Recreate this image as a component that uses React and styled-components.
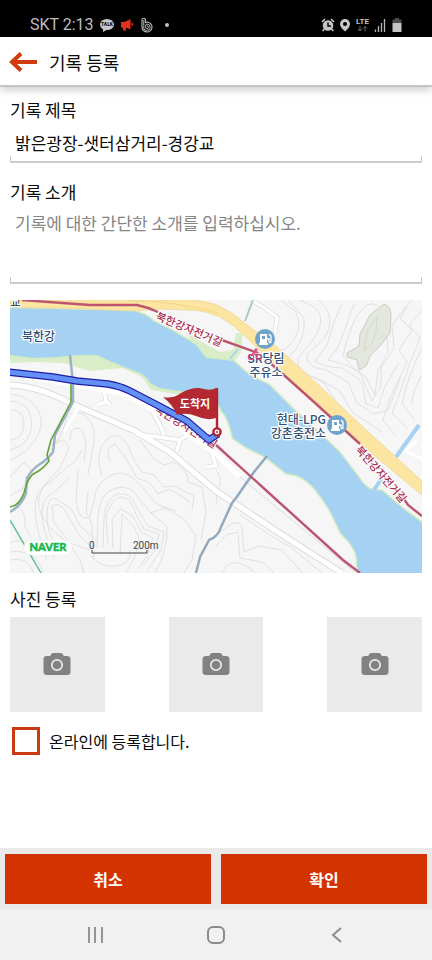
import { useState } from "react";
import styled, { createGlobalStyle } from "styled-components";

const GlobalStyle = createGlobalStyle`
  * {
    box-sizing: border-box;
  }
  body {
    margin: 0;
    background-color: white;
    color: #0a0a0a;
    font-family: "Noto Sans CJK KR", sans-serif;
  }
`;

const Screen = styled.div`
  display: flex;
  flex-direction: column;
  min-height: 100vh;
`;

const StatusBar = styled.div`
  display: flex;
  justify-content: space-between;
  align-items: center;
  height: 37px;
  padding: 13px 30px 0 30px;
  background-color: black;
  color: #bebebe;
  font-family: Roboto, sans-serif;
  font-size: 16px;
  line-height: 24px;
`;

const StatusGroup = styled.div`
  display: flex;
  align-items: center;
  gap: ${(props) => props.$gap};
`;

const Header = styled.header`
  display: flex;
  align-items: center;
  gap: 11px;
  height: 50px;
  padding: 2px 9px 0;
  border-bottom: 2px solid #c6c6c6;
  box-shadow: 0 3px 8px rgba(0, 0, 0, 0.2);
`;

const Title = styled.h1`
  margin: 0;
  font-size: 18px;
  font-weight: 400;
  line-height: 26px;
`;

const IconButton = styled.button`
  display: flex;
  padding: 0;
  border: none;
  background: none;
  cursor: pointer;
`;

const Form = styled.form`
  display: flex;
  flex-direction: column;
  flex: 1;
`;

const Content = styled.main`
  flex: 1;
  padding: 10px;
`;

const Field = styled.div`
  display: flex;
  flex-direction: column;
  margin-bottom: 16px;
`;

const Label = styled.label`
  font-size: 17px;
  line-height: 26px;
`;

const tickedLine = `
  display: block;
  width: 100%;
  padding: 4px 5px;
  border: none;
  border-bottom: 2px solid #cccccc;
  border-radius: 0;
  outline: none;
  background:
    linear-gradient(#cccccc, #cccccc) left bottom / 1px 5px no-repeat,
    linear-gradient(#cccccc, #cccccc) right bottom / 1px 5px no-repeat;
  color: #0a0a0a;
  font-family: inherit;
  font-size: 17px;
  line-height: 26px;
`;

const Input = styled.input`
  ${tickedLine}
  height: 40px;
`;

const TextArea = styled.textarea`
  ${tickedLine}
  height: 79px;
  padding-top: 5px;
  resize: none;
  &::placeholder {
    color: #858585;
    opacity: 1;
  }
`;

const Map = styled.svg`
  display: block;
  width: 100%;
  height: auto;
`;

const Subtitle = styled.h2`
  margin: 13px 0 5px;
  font-size: 17px;
  font-weight: 400;
  line-height: 26px;
`;

const Photos = styled.div`
  display: grid;
  grid-template-columns: repeat(3, 23%);
  justify-content: space-between;
`;

const PhotoButton = styled.button`
  display: flex;
  align-items: center;
  justify-content: center;
  aspect-ratio: 1;
  padding: 0;
  border: none;
  background-color: #eaeaea;
  cursor: pointer;
`;

const CheckLabel = styled.label`
  display: flex;
  align-items: center;
  gap: 9px;
  margin-top: 15px;
  padding-left: 2px;
  font-size: 16px;
  line-height: 24px;
`;

const Checkbox = styled.input`
  appearance: none;
  width: 28px;
  height: 28px;
  margin: 0;
  border: 3px solid #c93a12;
  background-color: white;
  &:checked {
    background-color: #d33300;
    box-shadow: inset 0 0 0 4px white;
  }
`;

const Actions = styled.div`
  display: grid;
  grid-template-columns: 1fr 1fr;
  gap: 10px;
  padding: 6px 5px;
  background-color: #eaeaea;
`;

const Button = styled.button`
  height: 50px;
  padding: 0;
  border: none;
  background-color: #d33300;
  color: white;
  font-family: inherit;
  font-size: 16px;
  font-weight: bold;
  cursor: pointer;
`;

const NavBar = styled.nav`
  display: flex;
  justify-content: space-between;
  align-items: center;
  height: 50px;
  padding: 0 83px;
  background-color: #f1f1f1;
`;

const RIVER =
  "M10 308 L90 310 133 311 Q146 314 153 321 L173 331 196 345 206 358 233 361 249 375 269 385 292 408 319 433 339 452 359 478 Q366 489 373 490 L382 491 402 508 422 523 V573 H358 L357 558 Q356 547 341 533 L331 512 Q324 500 316 490 Q306 478 296 475 L286 473 266 457 246 447 233 438 Q229 418 222 411 L213 394 187 392 160 388 150 383 Q147 376 138 372 L127 368 110 361 97 355 77 355 57 357 33 358 10 355 Z";

const HIGHWAY =
  "M10 300 H193 Q206 301 217 305 Q233 312 247 325 L277 347 310 377 363 427 422 481 V495 L383 463 330 417 273 363 247 338 Q234 325 220 317 Q204 310 187 310 L160 309 133 311 90 309 10 307 Z";

const MINOR_ROADS = [
  "M10 385 Q38 386 70 403 L135 431 170 452 216 491 290 540 342 573",
  "M136 434 L180 440 194 430 208 442 216 466 207 467 M180 440 L177 451 M151 409 L160 425 164 435",
  "M104 389 L106 402 97 405 M106 400 L110 405",
];

const CONTOURS = [
  // south hills
  "M10 394 Q30 396 38 410 T35 440 Q25 455 10 460",
  "M10 401 Q28 402 31 418 T22 445 L10 450",
  "M10 410 Q24 409 24 424 T10 440",
  "M56 444 Q64 430 66 420 T84 414 Q96 424 94 440 T88 474",
  "M70 440 Q70 428 77 428 T86 444 L84 462",
  "M50 445 Q66 435 69 448 L60 468 44 486 Q34 500 42 516 L52 530 70 545 80 560 84 573",
  "M47 560 Q36 530 35 510 T50 482 L76 460 82 450",
  "M54 558 Q42 530 42 514 T54 492 L69 478",
  "M62 555 Q46 535 47 514 T58 500 L72 510 80 526 96 540",
  "M52 506 Q60 500 67 514 L80 536 92 547 M52 506 L54 522 70 543 90 550",
  "M78 470 L76 500 Q79 524 90 516 L94 502 Q95 482 112 475 T146 492 L158 505 176 511",
  "M88 491 L86 514 Q94 520 92 540 L94 560",
  "M97 548 L98 515 Q100 492 116 488 T140 500 L152 514 167 526 Q168 550 155 573",
  "M103 548 L104 518 Q106 497 118 494 T136 506 L148 526 164 532 161 550 148 570",
  "M108 545 L106 516 Q112 498 121 497 T136 514 L144 529 159 534 155 550 143 566",
  "M113 548 L112 519 121 509 133 516 141 532 153 538 148 554 138 570",
  "M120 555 L122 514 134 527 140 541 134 558 126 573",
  "M102 476 Q94 452 106 440 T128 446 L134 460 142 472 154 475 164 487 174 486 194 496 192 510",
  "M110 462 Q104 448 115 444 L126 458 137 478 150 483 158 494 170 489 190 502",
  "M140 440 L154 459 164 465 174 462 186 472 188 482 202 487 206 512 201 540",
  "M150 513 L165 508 184 519 196 536 192 560 184 573",
  "M90 555 Q100 568 116 566 T130 550",
  "M10 552 Q36 548 43 573 M10 560 Q27 556 34 573 M10 543 Q20 538 30 545",
  "M10 477 L24 462 31 470 23 488 10 496",
  "M14 505 Q26 508 25 526 L31 537",
  "M216 470 Q224 480 218 490 L216 505",
  "M216 535 L226 528 Q238 518 242 526 L244 552 258 546 282 550 302 573",
  "M216 546 L226 535 238 532 240 558 262 562 274 573",
  "M222 573 Q230 556 248 567 L256 573",
  "M240 515 L270 535 292 548 322 573",
  // north-east hill
  "M281 300 L296 312 Q304 330 290 345 L281 352",
  "M288 300 L304 318 Q306 336 295 350 L288 358",
  "M300 300 L314 307 Q328 318 313 340 L298 358 Q296 374 317 378 L340 391 352 412 382 432",
  "M318 300 Q339 317 323 340 L307 354 Q304 367 326 370 L348 382 357 403 374 414 388 410 401 377",
  "M342 304 L334 322 327 345 315 361 Q322 367 342 368 L362 382 366 404 378 408 385 386 399 363",
  "M354 304 L345 329 337 349 328 360 346 365 360 372 372 401 381 386 381 367 394 348 392 326 406 306",
  "M367 305 L355 318 347 340 343 356 356 371 365 376 375 395 378 371 388 351 385 316 Q378 300 367 305",
  "M302 372 L324 383 340 407 364 430 M296 380 L316 386 326 404 352 426",
  "M411 300 L400 318 412 330 399 350 407 362 390 398 383 420 396 436",
  "M422 310 L409 325 420 338 411 360 398 398 392 413 407 428",
  "M422 348 Q407 378 402 404 L415 420 M422 375 Q412 392 412 404",
];

const GasIcon = ({ x, y }) => (
  <g transform={`translate(${x} ${y})`}>
    <circle r="10" fill="#6fa3cc" />
    <path d="M-5 5 V-5 H2 V5 Z M-6 4 H3 V6 H-6 Z" fill="white" />
    <path d="M-3 -3 H0 V0 H-3 Z" fill="#6fa3cc" />
    <path d="M2 0 H4 V3 Q6 5 6 2 V-3 L4 -5" fill="none" stroke="white" strokeWidth="1.3" />
  </g>
);

const RouteMap = () => (
  <Map viewBox="10 300 412 273" role="img" aria-label="지도" fontFamily='"Noto Sans CJK KR", sans-serif'>
    <rect x="10" y="300" width="412" height="273" fill="#f6f6f6" />
    <g fill="none" stroke="#dadada" strokeWidth="0.8" strokeLinejoin="round">
      {CONTOURS.map((d) => (
        <path key={d} d={d} />
      ))}
    </g>
    <path
      d="M384 304 Q391 306 391 316 L390 333 380 346 370 356 366 366 359 370 357 360 347 357 347 353 359 346 360 334 370 315 Z"
      fill="#e3e7dd"
      stroke="#c9cdc4"
    />
    <path d="M377 317 L367 331 364 350 371 345 376 332 Z" fill="none" stroke="#cfd4c9" strokeWidth="0.8" />

    {/* banks and river */}
    <path d="M10 352 V363 L37 362 63 363 90 371 123 368 142 377 151 390 188 396 212 396 190 380 77 352 Z" fill="#d9edc8" />
    <path d="M186 332 L204 343 220 352 233 350 236 333 243 333 241 352 234 362 200 358 Z" fill="#d9edc8" />
    <path d={RIVER} fill="#a5d2f3" stroke="#d3ecc0" strokeWidth="3" />
    <path d={RIVER} fill="#a5d2f3" />
    <path d="M374 490 L382 478 M396 457 L419 425" stroke="#a5d2f3" strokeWidth="4" />
    <path d="M230 359 L238 349" stroke="#a5d2f3" strokeWidth="1.5" />

    {/* minor roads */}
    <g fill="none" strokeLinejoin="round">
      {MINOR_ROADS.map((d, i) => (
        <path key={d} d={d} stroke="#dddddd" strokeWidth={i === 0 ? 7 : 5} />
      ))}
      <path d="M251 300 L263 307 277 317 275 334" stroke="#dddddd" strokeWidth="4.500" />
      <g stroke="white">
        {MINOR_ROADS.map((d, i) => (
          <path key={d} d={d} strokeWidth={i === 0 ? 5 : 3.5} />
        ))}
        <path d="M251 300 L263 307 277 317 275 334 M417 440 L405 451 422 459" strokeWidth="3" />
        <path d="M70 405 L78 408 64 432" strokeWidth="3" />
        <path d="M10 373 L80 386 125 394 160 414 216 454 240 477" strokeWidth="5" />
      </g>
      <path d="M240 477 L356 573" stroke="#dcdcdc" />
      <path d="M70 355 L73 383 73 402 55 435 53 452 Q47 460 40 464 T27 478 L26 493 Q22 505 10 512" stroke="#9bb2c8" strokeWidth="2.5" />
      <path d="M71 384 L71 402 51 440 47 455 49 461 Q42 470 35 473 T24 493 Q19 506 10 507" stroke="#64a338" strokeWidth="1.6" />
      <path d="M267 456 L254 472 236 498 232 503 221 527 Q218 537 209 540 L200 557 196 573" stroke="#91a9bf" strokeWidth="2.5" />
      <path d="M10 520 L41 573" stroke="#5bbd91" strokeWidth="1.4" />
      <path d="M253 300 L245 321" stroke="#a9cabd" strokeWidth="2" />
    </g>

    {/* highway */}
    <path d={HIGHWAY} fill="#fbe5a0" stroke="#eed79b" strokeWidth="0.8" />
    <path d="M128 301 Q170 300 218 313" fill="none" stroke="#f0d080" strokeWidth="0.8" />

    {/* bicycle path */}
    <g fill="none" stroke="#bd5571" strokeWidth="2.4">
      <path d="M22 300 L90 305 137 305 Q147 307 158 312" />
      <path d="M219 339 L258 353 276 368 314 402 360 444" />
      <path d="M402 496 L408 505 422 516" />
      <path d="M204 434 L216 445 280 503 343 560 360 573" />
    </g>
    <g fill="#a62e53" stroke="white" strokeWidth="2" paintOrder="stroke" fontSize="11" fontWeight="500">
      <text transform="translate(155 319) rotate(23)">북한강자전거길</text>
      <text transform="translate(355 450) rotate(49)">북한강자전거길</text>
      <text transform="translate(154 411) rotate(32)">북한강자전거길</text>
    </g>

    <g fill="#31527b" stroke="white" strokeWidth="2.4" paintOrder="stroke" strokeLinejoin="round" fontSize="12" fontWeight="500">
      <text x="22" y="341">북한강</text>
      <text x="266" y="363" textAnchor="middle">SR당림</text>
      <text x="266" y="377" textAnchor="middle">주유소</text>
      <text x="326" y="424" textAnchor="end">현대-LPG</text>
      <text x="326" y="438" textAnchor="end">강촌충전소</text>
    </g>
    <text x="10" y="307" fill="#333333" stroke="white" strokeWidth="2" paintOrder="stroke" fontSize="12">교</text>
    <GasIcon x={265} y={339} />
    <GasIcon x={337} y={425} />
    <g fill="none" stroke="#d94f7f" strokeWidth="1.3">
      <circle cx="251" cy="357" r="2.6" />
      <circle cx="259" cy="357" r="2.6" />
      <path d="M251 356 L254 352 258 353 M254 353 L257 357" />
      <circle cx="256" cy="350" r="1" />
    </g>

    {/* recorded route and its end flag */}
    <g fill="none" strokeLinejoin="round">
      <path d="M8 372 L53 377 77 381 108 384 Q120 386 130 391 L157 405 187 421 209 440 218 434" stroke="#1c1ca8" strokeWidth="7.500" />
      <path d="M8 372 L53 377 77 381 108 384 Q120 386 130 391 L157 405 187 421 209 440 218 434" stroke="#6390f5" strokeWidth="5" />
    </g>
    <path d="M163 397 Q173 399 181 393 Q194 386 204 389 Q211 391 216 388 V418 Q207 421 196 416 Q186 412 177 415 Q173 405 163 397 Z" fill="#b42931" />
    <path d="M217 388 V430" stroke="#b32430" strokeWidth="2.4" />
    <circle cx="217" cy="432" r="3.600" fill="white" stroke="#b32430" strokeWidth="2.4" />
    <circle cx="217" cy="432" r="1" fill="#b32430" />
    <text x="195" y="408" textAnchor="middle" fill="white" fontSize="11" fontWeight="bold">도착지</text>

    <rect x="24" y="540" width="48" height="15" rx="7" fill="white" stroke="#e8e8e8" strokeWidth="0.5" />
    <text x="48" y="551" textAnchor="middle" fill="#18b94b" stroke="#18b94b" strokeWidth="0.5" fontFamily="Lato, sans-serif" fontSize="11" fontWeight="900">NAVER</text>
    <path d="M92 550 V553 H147 V550" fill="none" stroke="#444444" />
    <g fill="#444444" fontFamily="Roboto, sans-serif" fontSize="10">
      <text x="89" y="549">0</text>
      <text x="133" y="549">200m</text>
    </g>
  </Map>
);

const StatusIcons = () => (
  <StatusGroup $gap="5px" aria-hidden="true">
    <svg width="14" height="14" viewBox="0 0 14 14">
      <path d="M1 4 L4 1 M10 1 L13 4 M3.500 11 L1.500 13 M10.500 11 L12.500 13" stroke="#c4c4c4" strokeWidth="1.6" />
      <circle cx="7" cy="7.5" r="5.3" fill="#c4c4c4" />
      <path d="M7 4.5 V8 H10" fill="none" stroke="black" strokeWidth="1.4" />
    </svg>
    <svg width="10" height="14" viewBox="0 0 10 14">
      <path d="M5 1 A5 5 0 0 0 0 6 C0 9.500 5 13.500 5 13.500 S10 9.500 10 6 A5 5 0 0 0 5 1 Z" fill="#c8c8c8" />
      <circle cx="5" cy="6" r="2" fill="black" />
    </svg>
    <svg width="14" height="16" viewBox="0 0 14 16">
      <text x="1" y="7" fill="#c0c0c0" fontFamily="Roboto, sans-serif" fontSize="8" fontWeight="bold">LTE</text>
      <path d="M5 9 V14 M3 12 L5 14 7 12 M10 14.500 V9.500 M8 11.500 L10 9.500 12 11.500" fill="none" stroke="#6a6a6a" />
    </svg>
    <svg width="12" height="14" viewBox="0 0 12 14">
      <path d="M1.500 14 V11.500 M4.500 14 V8 M7.500 14 V5 M10.500 14 V1" stroke="#b4b4b4" strokeWidth="1.300" />
    </svg>
    <svg width="11" height="14" viewBox="0 0 11 14">
      <path d="M4 0 H8 V1.500 H10.500 V5 H1.500 V1.500 H4 Z" fill="#4d4d4d" />
      <path d="M1.500 5 H10.500 V14 H1.500 Z" fill="#c4c4c4" />
    </svg>
  </StatusGroup>
);

const NotificationIcons = () => (
  <>
    <svg width="14" height="14" viewBox="0 0 14 14" aria-hidden="true">
      <ellipse cx="7" cy="6.500" rx="7" ry="5.600" fill="#c8c8c8" />
      <path d="M3 9 L3 14 L8 11 Z" fill="#c8c8c8" />
      <text x="7" y="8" textAnchor="middle" fill="black" fontFamily="Roboto, sans-serif" fontSize="5" fontWeight="bold">TALK</text>
    </svg>
    <svg width="14" height="14" viewBox="0 0 14 14" aria-hidden="true">
      <path d="M1 4 H4.500 L10.500 1 V11.500 L5.500 9.500 L6.500 12.500 H3.500 L2.500 9.500 H1 Z" fill="#e0321a" />
      <path d="M11.500 4 Q14.500 6 11.500 8.500 Z" fill="#e0321a" />
    </svg>
    <svg width="14" height="16" viewBox="0 0 14 16" fill="none" stroke="#b4b4b4" aria-hidden="true">
      <path d="M2 3 V9.500 A5 5 0 1 0 7.500 5 L5.500 5.500 V3 A1.750 1.750 0 0 0 2 3" strokeWidth="1.200" />
      <path d="M3.800 3 V9.500 A3.200 3.200 0 1 0 7 7 Q5.600 7 5.600 9 V10 A1.400 1.400 0 1 0 7 8.800" />
    </svg>
    <svg width="14" height="4" viewBox="0 0 14 4" aria-hidden="true">
      <circle cx="7" cy="2" r="2" fill="#c0c0c0" />
    </svg>
  </>
);

const CameraIcon = () => (
  <svg width="28" height="24" viewBox="0 0 28 24" aria-hidden="true">
    <path d="M4 4 H6.500 Q7.500 4 8 2.500 Q8.500 1 10 1 H18 Q19.500 1 20 2.500 Q20.500 4 21.500 4 H24 Q27.500 4 27.500 7 V20 Q27.500 23 24 23 H4 Q0.500 23 0.500 20 V7 Q0.500 4 4 4 Z" fill="#828282" />
    <circle cx="14" cy="13" r="5.200" fill="none" stroke="#eaeaea" strokeWidth="1.700" />
  </svg>
);

export default function App() {
  const [title, setTitle] = useState("밝은광장-샛터삼거리-경강교");
  const [intro, setIntro] = useState("");
  const [online, setOnline] = useState(false);

  const handleSubmit = (e) => {
    e.preventDefault();
  };

  return (
    <Screen>
      <GlobalStyle />
      <StatusBar>
        <StatusGroup $gap="6px">
          <span>SKT 2:13</span>
          <NotificationIcons />
        </StatusGroup>
        <StatusIcons />
      </StatusBar>
      <Header>
        <IconButton type="button" aria-label="뒤로">
          <svg width="29" height="20" viewBox="0 0 29 20" fill="none" stroke="#d13a0a" strokeWidth="4">
            <path d="M2 10 H28 M12 1.500 L3 10 L12 18.500" />
          </svg>
        </IconButton>
        <Title>기록 등록</Title>
      </Header>
      <Form onSubmit={handleSubmit}>
        <Content>
          <Field>
            <Label htmlFor="title">기록 제목</Label>
            <Input id="title" type="text" value={title} onChange={(e) => setTitle(e.target.value)} />
          </Field>
          <Field>
            <Label htmlFor="intro">기록 소개</Label>
            <TextArea
              id="intro"
              value={intro}
              placeholder="기록에 대한 간단한 소개를 입력하십시오."
              onChange={(e) => setIntro(e.target.value)}
            />
          </Field>
          <RouteMap />
          <Subtitle>사진 등록</Subtitle>
          <Photos>
            {[1, 2, 3].map((n) => (
              <PhotoButton key={n} type="button" aria-label={`사진 ${n}`}>
                <CameraIcon />
              </PhotoButton>
            ))}
          </Photos>
          <CheckLabel>
            <Checkbox type="checkbox" checked={online} onChange={(e) => setOnline(e.target.checked)} />
            온라인에 등록합니다.
          </CheckLabel>
        </Content>
        <Actions>
          <Button type="button">취소</Button>
          <Button type="submit">확인</Button>
        </Actions>
      </Form>
      <NavBar>
        <IconButton type="button" aria-label="최근 앱">
          <svg width="24" height="18" viewBox="0 0 24 18" stroke="#8b8b8b" strokeWidth="1.800">
            <path d="M6 1 V17 M12 1 V17 M19 1 V17" />
          </svg>
        </IconButton>
        <IconButton type="button" aria-label="홈">
          <svg width="18" height="18" viewBox="0 0 18 18" fill="none" stroke="#8b8b8b" strokeWidth="2">
            <rect x="1" y="1" width="16" height="16" rx="5" />
          </svg>
        </IconButton>
        <IconButton type="button" aria-label="뒤로 가기">
          <svg width="24" height="18" viewBox="0 0 24 18" fill="none" stroke="#8b8b8b" strokeWidth="2">
            <path d="M16 2 L8 9 L16 16" />
          </svg>
        </IconButton>
      </NavBar>
    </Screen>
  );
}
